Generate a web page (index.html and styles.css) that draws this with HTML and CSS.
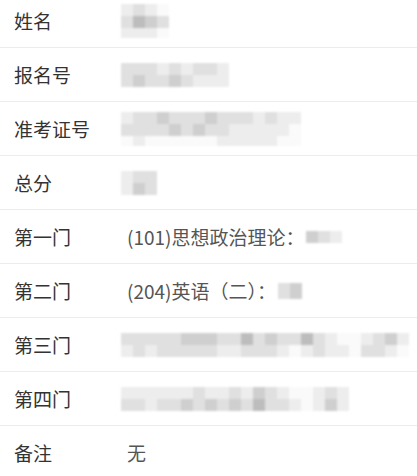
FILE: index.html
```html
<!DOCTYPE html>
<html lang="zh-CN">
<head>
    <meta charset="UTF-8">
    <meta name="viewport" content="width=device-width, initial-scale=1.0">
    <title>成绩查询</title>
    <link rel="stylesheet" href="styles.css">
</head>
<body>
    <div class="list">
        <div class="row">
            <div class="label">姓名</div>
            <div class="value">
                <span class="mask rows-3">
                    <i class="s1"></i><i class="s2"></i><i class="s1"></i>
                    <i class="s2"></i><i class="s4"></i><i class="s1"></i>
                    <i class="s1"></i><i class="s3"></i><i class="s1"></i>
                    <i class="s0"></i><i class="s2"></i><i class="s0"></i>
                </span>
            </div>
        </div>
        <div class="row">
            <div class="label">报名号</div>
            <div class="value">
                <span class="mask">
                    <i class="s2"></i><i class="s2"></i>
                    <i class="s2"></i><i class="s3"></i>
                    <i class="s2"></i><i class="s2"></i>
                    <i class="s1"></i><i class="s2"></i>
                    <i class="s2"></i><i class="s3"></i>
                    <i class="s1"></i><i class="s2"></i>
                    <i class="s2"></i><i class="s1"></i>
                    <i class="s2"></i><i class="s1"></i>
                    <i class="s1"></i><i class="s1"></i>
                </span>
            </div>
        </div>
        <div class="row">
            <div class="label">准考证号</div>
            <div class="value">
                <span class="mask rows-3">
                    <i class="s1"></i><i class="s2"></i><i class="s0"></i>
                    <i class="s2"></i><i class="s2"></i><i class="s1"></i>
                    <i class="s2"></i><i class="s2"></i><i class="s0"></i>
                    <i class="s3"></i><i class="s2"></i><i class="s0"></i>
                    <i class="s2"></i><i class="s3"></i><i class="s0"></i>
                    <i class="s2"></i><i class="s2"></i><i class="s0"></i>
                    <i class="s2"></i><i class="s3"></i><i class="s0"></i>
                    <i class="s3"></i><i class="s2"></i><i class="s0"></i>
                    <i class="s2"></i><i class="s2"></i><i class="s1"></i>
                    <i class="s2"></i><i class="s1"></i><i class="s1"></i>
                    <i class="s2"></i><i class="s1"></i><i class="s1"></i>
                    <i class="s1"></i><i class="s1"></i><i class="s1"></i>
                    <i class="s2"></i><i class="s1"></i><i class="s1"></i>
                    <i class="s1"></i><i class="s1"></i><i class="s0"></i>
                    <i class="s1"></i><i class="s0"></i><i class="s0"></i>
                </span>
            </div>
        </div>
        <div class="row">
            <div class="label">总分</div>
            <div class="value">
                <span class="mask">
                    <i class="s1"></i><i class="s1"></i>
                    <i class="s2"></i><i class="s3"></i>
                    <i class="s2"></i><i class="s2"></i>
                </span>
            </div>
        </div>
        <div class="row">
            <div class="label">第一门</div>
            <div class="value">
                <span class="text">(101)思想政治理论：</span>
                <span class="mask rows-1">
                    <i class="s3"></i><i class="s2"></i><i class="s1"></i>
                </span>
            </div>
        </div>
        <div class="row">
            <div class="label">第二门</div>
            <div class="value">
                <span class="text">(204)英语（二）：</span>
                <span class="mask rows-1 tall">
                    <i class="s2"></i><i class="s3"></i>
                </span>
            </div>
        </div>
        <div class="row">
            <div class="label">第三门</div>
            <div class="value">
                <span class="mask">
                    <i class="s2"></i><i class="s1"></i>
                    <i class="s2"></i><i class="s2"></i>
                    <i class="s2"></i><i class="s1"></i>
                    <i class="s2"></i><i class="s2"></i>
                    <i class="s2"></i><i class="s2"></i>
                    <i class="s3"></i><i class="s2"></i>
                    <i class="s3"></i><i class="s2"></i>
                    <i class="s3"></i><i class="s2"></i>
                    <i class="s2"></i><i class="s1"></i>
                    <i class="s2"></i><i class="s1"></i>
                    <i class="s4"></i><i class="s2"></i>
                    <i class="s2"></i><i class="s2"></i>
                    <i class="s3"></i><i class="s2"></i>
                    <i class="s2"></i><i class="s1"></i>
                    <i class="s2"></i><i class="s0"></i>
                    <i class="s4"></i><i class="s1"></i>
                    <i class="s2"></i><i class="s2"></i>
                    <i class="s1"></i><i class="s1"></i>
                    <i class="s0"></i><i class="s1"></i>
                    <i class="s0"></i><i class="s0"></i>
                    <i class="s1"></i><i class="s2"></i>
                    <i class="s2"></i><i class="s2"></i>
                    <i class="s3"></i><i class="s1"></i>
                    <i class="s1"></i><i class="s0"></i>
                </span>
            </div>
        </div>
        <div class="row">
            <div class="label">第四门</div>
            <div class="value">
                <span class="mask">
                    <i class="s1"></i><i class="s2"></i>
                    <i class="s1"></i><i class="s2"></i>
                    <i class="s1"></i><i class="s1"></i>
                    <i class="s1"></i><i class="s2"></i>
                    <i class="s1"></i><i class="s2"></i>
                    <i class="s1"></i><i class="s3"></i>
                    <i class="s2"></i><i class="s2"></i>
                    <i class="s1"></i><i class="s3"></i>
                    <i class="s1"></i><i class="s2"></i>
                    <i class="s2"></i><i class="s3"></i>
                    <i class="s1"></i><i class="s2"></i>
                    <i class="s3"></i><i class="s4"></i>
                    <i class="s2"></i><i class="s2"></i>
                    <i class="s1"></i><i class="s2"></i>
                    <i class="s0"></i><i class="s1"></i>
                    <i class="s0"></i><i class="s0"></i>
                    <i class="s1"></i><i class="s1"></i>
                    <i class="s2"></i><i class="s3"></i>
                    <i class="s1"></i><i class="s1"></i>
                </span>
            </div>
        </div>
        <div class="row">
            <div class="label">备注</div>
            <div class="value">
                <span class="text">无</span>
            </div>
        </div>
    </div>
</body>
</html>
```

FILE: styles.css
```css
:root {
    --text-label: #333333;
    --text-value: #555555;
    --divider: #ececec;
}

body {
    margin: 0;
    padding: 0;
    background: #ffffff;
    font-family: "Noto Sans CJK SC", "Noto Sans", sans-serif;
    overflow: hidden;
}

.list {
    margin-top: -6px;
}

.row {
    display: flex;
    align-items: center;
    height: 53px;
    border-bottom: 1px solid var(--divider);
}

.row:last-child {
    border-bottom: none;
}

.label {
    width: 107px;
    padding-left: 14px;
    flex-shrink: 0;
    font-size: 19px;
    color: var(--text-label);
}

.value {
    display: flex;
    align-items: center;
    font-size: 19px;
    color: var(--text-value);
}

.text {
    margin-left: 6px;
}

/* blurred mosaic over private values */
.mask {
    display: grid;
    grid-template-rows: 12px 12px;
    grid-auto-flow: column;
    grid-auto-columns: 12px;
    filter: blur(0.8px);
}

.mask.rows-3 {
    grid-template-rows: 12px 12px 10px;
}

.mask.rows-1 {
    grid-template-rows: 12px;
    margin-left: 2px;
}

.mask.tall {
    grid-template-rows: 16px;
}

.mask i { display: block; }
.mask .s0 { background: #fafafa; }
.mask .s1 { background: #ededed; }
.mask .s2 { background: #e0e0e0; }
.mask .s3 { background: #cfcfcf; }
.mask .s4 { background: #bdbdbd; }
```
